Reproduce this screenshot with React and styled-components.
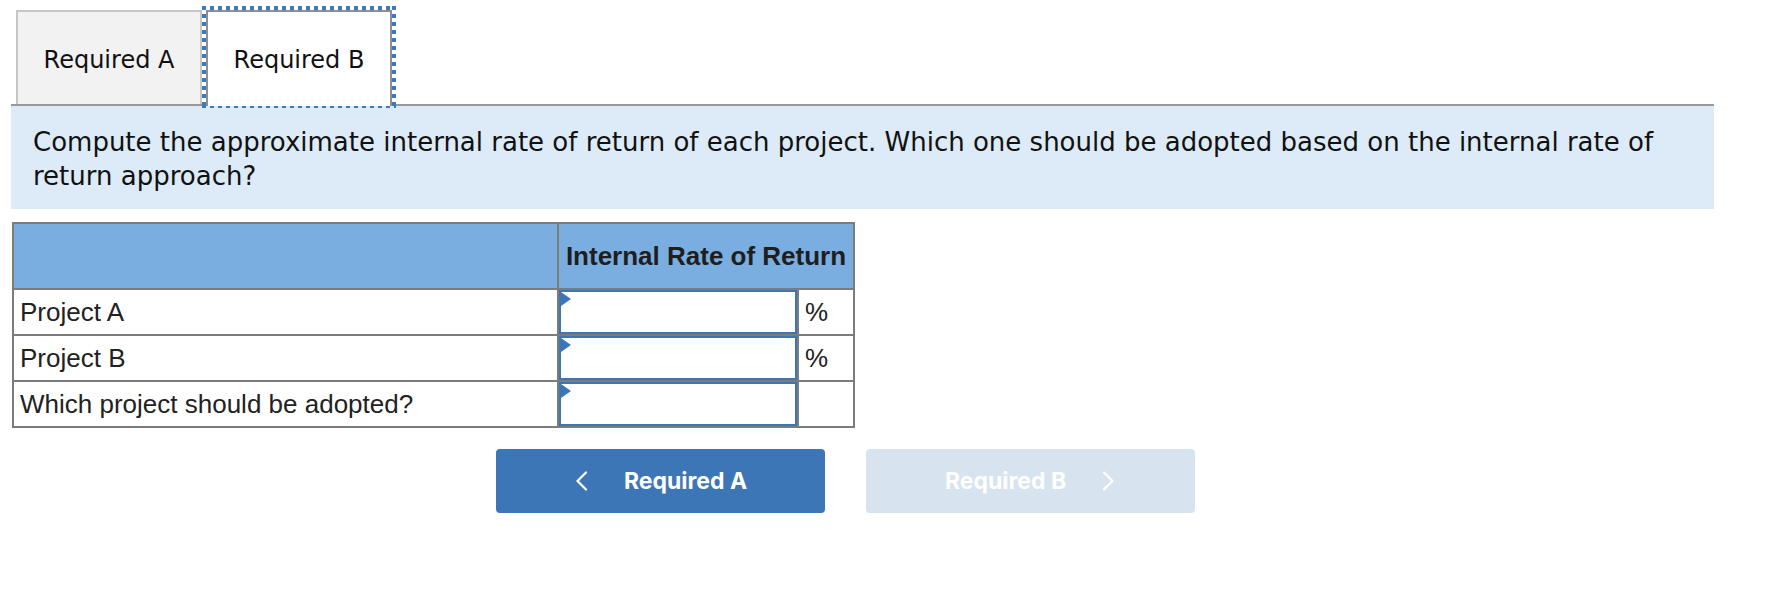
import React from "react";
import styled, { createGlobalStyle } from "styled-components";

const GlobalStyle = createGlobalStyle`
  html, body {
    margin: 0;
    padding: 0;
    background: #ffffff;
  }
  * { box-sizing: border-box; }
`;

const Page = styled.div`
  width: 1780px;
  padding: 0 0 0 11px;
  font-family: "DejaVu Sans", Verdana, sans-serif;
  color: #111;
`;

const TabRow = styled.div`
  display: flex;
  align-items: flex-end;
  gap: 4px;
  padding: 10px 0 0 5px;
  width: 1703px;
`;

const Tab = styled.div`
  position: relative;
  width: 186px;
  height: ${(p) => (p.$active ? "96px" : "94px")};
  margin-bottom: ${(p) => (p.$active ? "-2px" : "0")};
  z-index: ${(p) => (p.$active ? 1 : 0)};
  display: flex;
  align-items: center;
  justify-content: center;
  padding-top: 3px;
  padding-bottom: ${(p) => (p.$active ? "2px" : "0")};
  background: ${(p) => (p.$active ? "#ffffff" : "#f2f2f2")};
  border: 2px solid ${(p) => (p.$active ? "#8f8f8f" : "#c6c6c6")};
  border-bottom: none;
  font-size: 24px;
  color: #111;
  cursor: pointer;

  ${(p) =>
    p.$focused &&
    `
    &::after {
      content: "";
      position: absolute;
      top: -6px;
      left: -6px;
      right: -6px;
      bottom: -2px;
      pointer-events: none;
      background:
        linear-gradient(to right, #3d78c2 50%, transparent 0) top left / 8px 4px repeat-x,
        linear-gradient(to right, #3d78c2 50%, transparent 0) bottom left / 8px 2px repeat-x,
        linear-gradient(to bottom, #3d78c2 50%, transparent 0) top left / 4px 8px repeat-y,
        linear-gradient(to bottom, #3d78c2 50%, transparent 0) top right / 4px 8px repeat-y;
    }
  `}
`;

const Prompt = styled.div`
  width: 1703px;
  background: #dcebf7;
  border-top: 2px solid #999999;
  padding: 19px 18px 16px 22px;
  font-size: 26px;
  line-height: 34px;
  color: #111;
`;

const Grid = styled.table`
  margin: 13px 0 0 1px;
  border-collapse: collapse;
  table-layout: fixed;
  width: 841px;
  font-family: "Liberation Sans", Arial, sans-serif;
  font-size: 26px;
  color: #222;
  border: 2px solid #7c7c7c;
`;

const HeadCell = styled.th`
  height: 66px;
  padding: 0 4px;
  background: #7aaee1;
  border: 2px solid #7c7c7c;
  font-weight: 700;
  text-align: center;
  white-space: nowrap;
  color: #1e1e1e;
`;

const Cell = styled.td`
  height: 46px;
  padding: 0 6px;
  border: 2px solid #7c7c7c;
  white-space: nowrap;
  vertical-align: middle;
`;

const InputCell = styled.td`
  height: 46px;
  padding: 0;
  border: 2px solid #7c7c7c;
  position: relative;
  vertical-align: middle;

  &::before {
    content: "";
    position: absolute;
    left: 2px;
    top: 2px;
    width: 0;
    height: 0;
    border-top: 7px solid transparent;
    border-bottom: 7px solid transparent;
    border-left: 10px solid #3d76b6;
    pointer-events: none;
  }
`;

const Field = styled.input`
  display: block;
  width: 100%;
  height: 44px;
  margin: 0;
  border: 2px solid #3d76b6;
  background: #ffffff;
  font-family: "Liberation Sans", Arial, sans-serif;
  font-size: 24px;
  padding: 0 8px;
  outline: none;
`;

const Nav = styled.div`
  display: flex;
  justify-content: center;
  gap: 41px;
  width: 1669px;
  margin-top: 21px;
`;

const NavButton = styled.button`
  width: 329px;
  height: 64px;
  border: none;
  border-radius: 4px;
  background: ${(p) => (p.$disabled ? "#d8e3f0" : "#3d76b6")};
  color: #ffffff;
  font-family: Inter, "Open Sans", sans-serif;
  font-weight: 700;
  font-size: 23px;
  display: flex;
  align-items: center;
  justify-content: center;
  gap: 36px;
  cursor: ${(p) => (p.$disabled ? "default" : "pointer")};
  padding: 0;
`;

const Chevron = ({ dir }) => (
  <svg width="14" height="20" viewBox="0 0 14 20" aria-hidden="true">
    <path
      d={dir === "left" ? "M12 1.5 L3.5 10 L12 18.5" : "M2 1.5 L10.5 10 L2 18.5"}
      fill="none"
      stroke="#ffffff"
      strokeWidth="2.2"
      strokeLinecap="round"
      strokeLinejoin="round"
    />
  </svg>
);

const rows = [
  { label: "Project A", unit: "%" },
  { label: "Project B", unit: "%" },
  { label: "Which project should be adopted?", unit: "" },
];

export default function App() {
  return (
    <>
      <GlobalStyle />
      <Page>
        <TabRow>
          <Tab>Required A</Tab>
          <Tab $active $focused>
            Required B
          </Tab>
        </TabRow>
        <Prompt>
          Compute the approximate internal rate of return of each project. Which one should be
          adopted based on the internal rate of return approach?
        </Prompt>
        <Grid>
          <colgroup>
            <col style={{ width: "545px" }} />
            <col style={{ width: "240px" }} />
            <col style={{ width: "56px" }} />
          </colgroup>
          <thead>
            <tr>
              <HeadCell />
              <HeadCell colSpan={2}>Internal Rate of Return</HeadCell>
            </tr>
          </thead>
          <tbody>
            {rows.map((r) => (
              <tr key={r.label}>
                <Cell>{r.label}</Cell>
                <InputCell>
                  <Field type="text" aria-label={r.label} />
                </InputCell>
                <Cell>{r.unit}</Cell>
              </tr>
            ))}
          </tbody>
        </Grid>
        <Nav>
          <NavButton>
            <Chevron dir="left" />
            <span>Required A</span>
          </NavButton>
          <NavButton $disabled>
            <span>Required B</span>
            <Chevron dir="right" />
          </NavButton>
        </Nav>
      </Page>
    </>
  );
}
